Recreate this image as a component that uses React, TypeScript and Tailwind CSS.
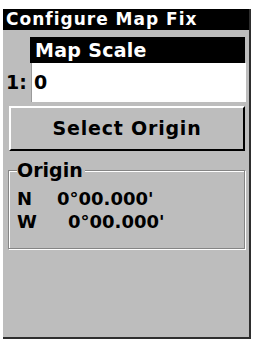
export default function App() {
  const font = { fontFamily: '"DejaVu Sans", "Liberation Sans", sans-serif' }
  return (
    <div className="w-[253px] h-[339px] bg-white pt-[9px] pl-[3px] pr-[2px] overflow-hidden" style={font}>
      <div className="h-[330px] flex flex-col bg-[#bdbdbd] border-r-2 border-b-2 border-[#2e2e2e] font-bold text-black">
        <div className="h-[21px] bg-black text-white text-[17px] leading-[21px] pl-[3px] tracking-[1px]">
          Configure Map Fix
        </div>
        <div className="mt-[7px] ml-[27px] mr-[4px] h-[26px] bg-black text-white text-[19px] leading-[26px] pl-[5px] tracking-[0.3px]">
          Map Scale
        </div>
        <div className="flex items-center">
          <div className="w-[28px] pl-[3px] text-[19px] leading-none">1:</div>
          <div className="flex-1 mr-[3px] h-[39px] bg-white border-l border-[#9a9a9a] pl-[2px] text-[19px] leading-[39px]">
            0
          </div>
        </div>
        <div className="mt-[4px] ml-[6px] mr-[4px] h-[45px] border-t-2 border-l-2 border-white border-b-2 border-r-2 border-b-black border-r-black flex items-center justify-center text-[19px] tracking-[0.8px]">
          Select Origin
        </div>
        <div className="relative mt-[19px] ml-[5px] mr-[4px] h-[79px] border border-[#858585] shadow-[inset_1px_1px_0_#fff,1px_1px_0_#fff] pt-[16px] pl-[8px]">
          <div className="absolute left-[8px] top-[-11px] bg-[#bdbdbd] pr-[2px] text-[19px] leading-[20px]">Origin</div>
          <div className="flex text-[18px] leading-[23px]">
            <span className="w-[40px]">N</span>
            <span>0°00.000'</span>
          </div>
          <div className="flex text-[18px] leading-[23px]">
            <span className="w-[51px]">W</span>
            <span>0°00.000'</span>
          </div>
        </div>
      </div>
    </div>
  )
}
